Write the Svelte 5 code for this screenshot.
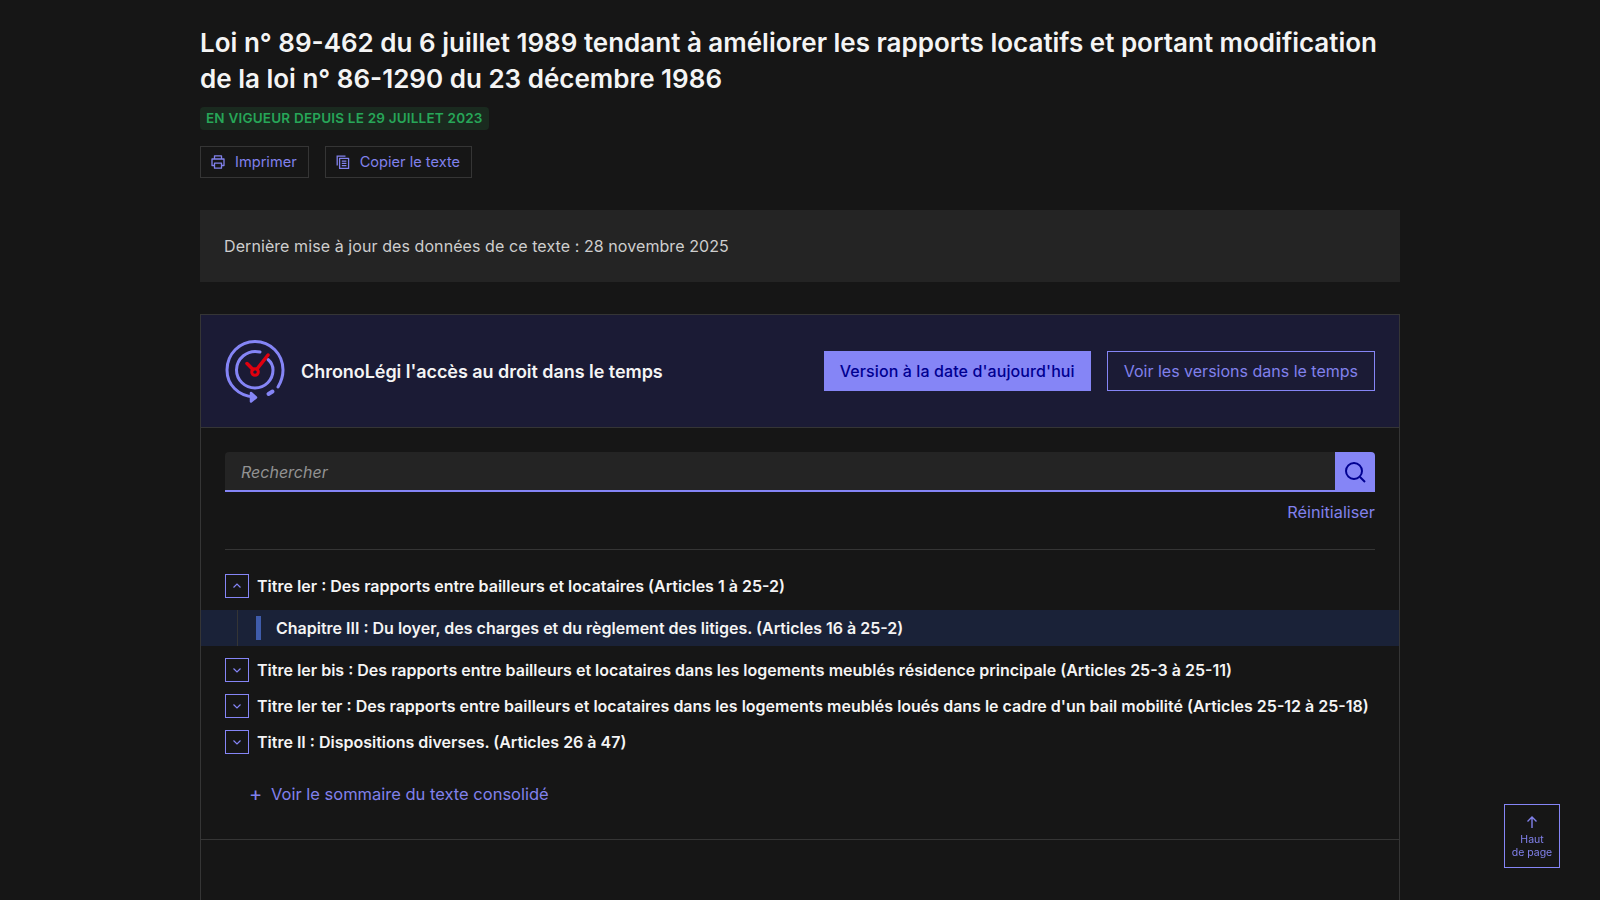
<script>
	// Top level entries of the summary, the first one is open
	const titres = [
		{ label: "Titre Ier bis : Des rapports entre bailleurs et locataires dans les logements meublés résidence principale (Articles 25-3 à 25-11)" },
		{ label: "Titre Ier ter : Des rapports entre bailleurs et locataires dans les logements meublés loués dans le cadre d'un bail mobilité (Articles 25-12 à 25-18)" },
		{ label: "Titre II : Dispositions diverses. (Articles 26 à 47)" }
	];
</script>

<div class="page">
	<h1>Loi n° 89-462 du 6 juillet 1989 tendant à améliorer les rapports locatifs et portant modification de la loi n° 86-1290 du 23 décembre 1986</h1>
	<span class="badge">EN VIGUEUR DEPUIS LE 29 JUILLET 2023</span>

	<div class="tools">
		<button class="tool">
			<svg viewBox="0 0 16 16" width="16" height="16" fill="none" stroke="currentColor" stroke-width="1.3">
				<path d="M4.5 5V1.8h7V5M4.5 11.5H2V5h12v6.5h-2.5" stroke-linejoin="round" />
				<path d="M4.5 9.2h7v5h-7z" stroke-linejoin="round" />
			</svg>
			Imprimer
		</button>
		<button class="tool">
			<svg viewBox="0 0 16 16" width="16" height="16" fill="none" stroke="currentColor" stroke-width="1.3">
				<path d="M2.2 11.5V2.2h8.3" />
				<path d="M4.6 4.4h9v10h-9z" stroke-linejoin="round" />
				<path d="M6.8 7.2h4.6M6.8 9.4h4.6M6.8 11.6h4.6" />
			</svg>
			Copier le texte
		</button>
	</div>

	<div class="update">Dernière mise à jour des données de ce texte : 28 novembre 2025</div>

	<section class="card">
		<header class="chrono">
			<svg class="logo" viewBox="0 0 60 64" width="60" height="64" fill="none" stroke-linecap="round" stroke-linejoin="round">
				<path d="M29 58C13 57 2 45.5 2 31 2 15 14.5 2.500 30 2.500S58 15 58 31c0 6-2 12-5 17" stroke="#8585f6" stroke-width="3" />
				<path d="M26 54l5 4.5-5 4z" fill="#8585f6" stroke="#8585f6" stroke-width="2.5" />
				<path d="M47.5 52.5l-4 2.5" stroke="#8585f6" stroke-width="4" />
				<path d="M35 13C22 10 11.5 20 11.5 31 11.5 41 20 49 30 49s18-8 18-18c0-4-2-8-5-10.5" stroke="#8585f6" stroke-width="3" />
				<circle cx="30" cy="33" r="3.300" stroke="#e1000f" stroke-width="3" />
				<path d="M28 30.5L22 24.5M32 30l11-14" stroke="#e1000f" stroke-width="3.5" />
			</svg>
			<strong class="chrono-title">ChronoLégi l'accès au droit dans le temps</strong>
			<div class="chrono-actions">
				<button class="primary">Version à la date d'aujourd'hui</button>
				<button class="secondary">Voir les versions dans le temps</button>
			</div>
		</header>

		<div class="body">
			<div class="search">
				<div class="search-input">Rechercher</div>
				<button class="search-btn" aria-label="Rechercher">
					<svg viewBox="0 0 24 24" width="24" height="24" fill="none" stroke="#000091" stroke-width="2">
						<circle cx="11" cy="11" r="8" />
						<path d="M17 17l5 5" />
					</svg>
				</button>
			</div>
			<div class="reset"><span>Réinitialiser</span></div>
			<hr />

			<div class="titre">
				<span class="toggle">
					<svg viewBox="0 0 12 12" width="12" height="12" fill="none" stroke="currentColor" stroke-width="1.2"><path d="M2.5 7.5L6 4l3.5 3.5" /></svg>
				</span>
				<span>Titre Ier : Des rapports entre bailleurs et locataires (Articles 1 à 25-2)</span>
			</div>
		</div>

		<div class="chapitre">
			<div class="chapitre-line"><span class="marker"></span>Chapitre III : Du loyer, des charges et du règlement des litiges. (Articles 16 à 25-2)</div>
		</div>

		<div class="body rest">
			{#each titres as t}
				<div class="titre">
					<span class="toggle">
						<svg viewBox="0 0 12 12" width="12" height="12" fill="none" stroke="currentColor" stroke-width="1.2"><path d="M2.5 4.5L6 8l3.5-3.5" /></svg>
					</span>
					<span>{t.label}</span>
				</div>
			{/each}
			<div class="more"><span class="plus">+</span>Voir le sommaire du texte consolidé</div>
		</div>

		<div class="next"></div>
	</section>
</div>

<a class="top" href="#app">
	<svg viewBox="0 0 16 16" width="16" height="16" fill="none" stroke="currentColor" stroke-width="1.4"><path d="M8 14V3M3.5 7.5L8 3l4.5 4.5" /></svg>
	<span>Haut<br />de page</span>
</a>

<style>
	:global(body) {
		background: #161616;
		color: #fff;
		font-family: "Inter", "Noto Sans", sans-serif;
		height: 900px;
		overflow: hidden;
	}

	.page {
		width: 1200px;
		margin: 0 auto;
		padding-top: 25px;
	}

	h1 {
		margin: 0;
		font-size: 26px;
		line-height: 36px;
		font-weight: 600;
		color: #f4f4f4;
	}

	.badge {
		display: inline-block;
		margin-top: 10px;
		padding: 0 6px;
		height: 23px;
		line-height: 23px;
		border-radius: 4px;
		background: #1a2a1f;
		color: #27a658;
		font-size: 13.5px;
		font-weight: 600;
		letter-spacing: 0.2px;
	}

	.tools {
		display: flex;
		gap: 16px;
		margin-top: 16px;
	}

	button {
		font-family: inherit;
		cursor: pointer;
	}

	.tool {
		display: flex;
		align-items: center;
		gap: 9px;
		height: 32px;
		padding: 0 11px 0 9px;
		background: none;
		border: 1px solid #353535;
		color: #8181ec;
		font-size: 14.6px;
	}

	.update {
		margin-top: 32px;
		height: 72px;
		display: flex;
		align-items: center;
		padding: 0 24px;
		background: #242424;
		color: #cecece;
		font-size: 16px;
		letter-spacing: 0.08px;
	}

	.card {
		margin-top: 32px;
		border: 1px solid #353535;
		border-bottom: none;
	}

	.chrono {
		display: flex;
		align-items: center;
		height: 112px;
		padding: 0 24px;
		background: #1b1b35;
		border-bottom: 1px solid #353535;
	}

	.logo {
		flex: none;
		margin-right: 16px;
	}

	.chrono-title {
		font-size: 18px;
		font-weight: 600;
		letter-spacing: -0.05px;
		color: #f4f4f4;
	}

	.chrono-actions {
		display: flex;
		gap: 16px;
		margin-left: auto;
	}

	.primary,
	.secondary {
		height: 40px;
		padding: 0 16px;
		font-size: 16px;
	}

	.primary {
		background: #8585f6;
		border: none;
		color: #000091;
		font-weight: 500;
		letter-spacing: 0.1px;
	}

	.secondary {
		background: none;
		border: 1px solid #8585f6;
		color: #8181ec;
	}

	.body {
		padding: 24px 24px 0;
	}

	.search {
		display: flex;
		height: 40px;
	}

	.search-input {
		flex: 1;
		display: flex;
		align-items: center;
		padding: 0 16px;
		background: #242424;
		border-radius: 4px 0 0 0;
		box-shadow: inset 0 -2px 0 #8585f6;
		color: #929292;
		font-size: 16px;
		font-style: italic;
	}

	.search-btn {
		width: 40px;
		display: flex;
		align-items: center;
		justify-content: center;
		padding: 0;
		border: none;
		border-radius: 0 4px 0 0;
		background: #8585f6;
	}

	.reset {
		display: flex;
		justify-content: flex-end;
		margin-top: 9px;
		font-size: 16.3px;
		line-height: 22px;
		color: #8181ec;
	}

	hr {
		margin: 26px 0 0;
		border: none;
		border-top: 1px solid #353535;
	}

	.titre {
		display: flex;
		align-items: center;
		gap: 8px;
		height: 36px;
		font-size: 16px;
		font-weight: 600;
		color: #f4f4f4;
		white-space: nowrap;
	}

	.body > hr + .titre {
		margin-top: 18px;
	}

	.toggle {
		flex: none;
		width: 24px;
		height: 24px;
		box-sizing: border-box;
		display: flex;
		align-items: center;
		justify-content: center;
		border: 1px solid #8585f6;
		color: #8585f6;
	}

	.chapitre {
		height: 36px;
		margin-top: 6px;
		padding-left: 36px;
		background: #1a2238;
	}

	.chapitre-line {
		height: 100%;
		display: flex;
		align-items: center;
		padding-left: 18px;
		border-left: 1px solid #353535;
		font-size: 16px;
		font-weight: 600;
		color: #f4f4f4;
	}

	.marker {
		width: 5px;
		height: 24px;
		margin-right: 15px;
		background: #3f5cab;
	}

	.rest {
		padding-top: 6px;
	}

	.more {
		display: flex;
		align-items: center;
		margin: 20px 0 0 24px;
		height: 28px;
		color: #8181ec;
		font-size: 16.5px;
	}

	.plus {
		width: 22px;
		font-size: 20px;
	}

	.next {
		margin-top: 31px;
		border-top: 1px solid #353535;
		height: 70px;
	}

	.top {
		position: fixed;
		left: 1504px;
		top: 804px;
		width: 56px;
		height: 64px;
		box-sizing: border-box;
		display: flex;
		flex-direction: column;
		align-items: center;
		padding-top: 9px;
		border: 1px solid #8585f6;
		color: #8181ec;
		font-size: 10.5px;
		line-height: 13px;
		text-align: center;
		text-decoration: none;
	}

	.top span {
		margin-top: 3px;
	}
</style>
